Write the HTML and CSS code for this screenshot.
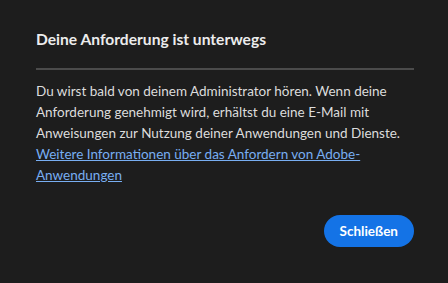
FILE: index.html
```html
<!DOCTYPE html>
<html lang="de">
<head>
<meta charset="utf-8">
<link rel="stylesheet" href="styles.css">
</head>
<body>
<div class="dialog">
  <h1 class="title">Deine Anforderung ist unterwegs</h1>
  <hr class="divider">
  <p class="content">Du wirst bald von deinem Administrator hören. Wenn deine Anforderung genehmigt wird, erhältst du eine E-Mail mit Anweisungen zur Nutzung deiner Anwendungen und Dienste. <a class="link" href="#">Weitere Informationen über das Anfordern von Adobe-Anwendungen</a></p>
  <div class="actions">
    <button class="btn">Schließen</button>
  </div>
</div>
</body>
</html>
```
FILE: styles.css
```css
html, body {
  margin: 0;
  padding: 0;
  background: #1d1d1d;
}
body {
  width: 448px;
  height: 283px;
  overflow: hidden;
}
.dialog {
  box-sizing: border-box;
  width: 448px;
  height: 283px;
  padding: 28px 34px 36px 36px;
  font-family: Lato, "Open Sans", sans-serif;
  color: #e3e3e3;
}
.title {
  margin: 0;
  font-size: 15.6px;
  font-weight: 700;
  line-height: 22px;
  color: #ececec;
}
.divider {
  margin: 18px 0 0 0;
  border: 0;
  height: 2px;
  background: #4b4b4b;
}
.content {
  margin: 11px 0 0 0;
  font-size: 13.5px;
  line-height: 21px;
  color: #dcdcdc;
}
.link {
  color: #78aef2;
  text-decoration: underline;
}
.actions {
  display: flex;
  justify-content: flex-end;
  margin-top: 29px;
}
.btn {
  height: 32px;
  padding: 0 16px;
  border: 0;
  border-radius: 16px;
  background: #1473e6;
  color: #fff;
  font-family: Lato, "Open Sans", sans-serif;
  font-size: 13.5px;
  font-weight: 700;
}
```
